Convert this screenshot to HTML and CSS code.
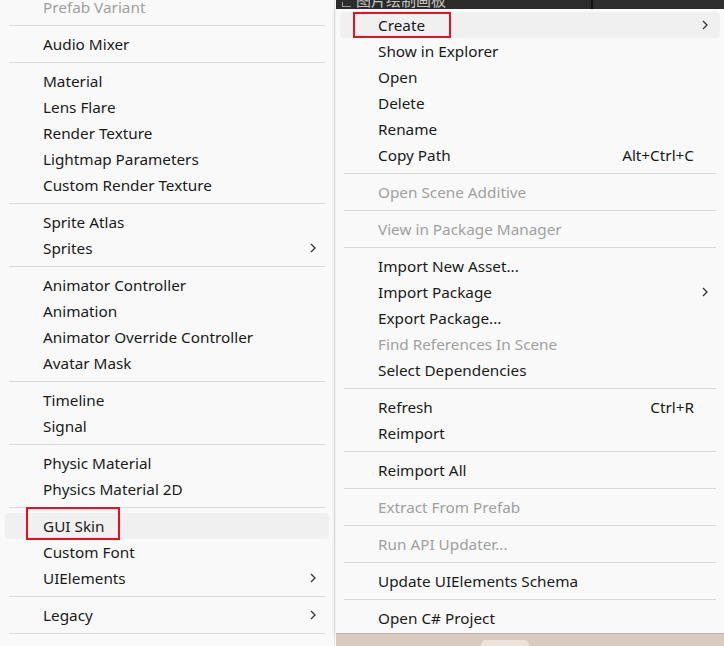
FILE: index.html
```html
<!DOCTYPE html>
<html>
<head>
<meta charset="utf-8">
<link rel="stylesheet" href="styles.css">
</head>
<body>
<div class="screen">
  <div class="menu left-menu">
    <div class="list left-list">
      <div class="item disabled"><span class="label">Prefab Variant</span></div>
      <div class="sep"></div>
      <div class="item"><span class="label">Audio Mixer</span></div>
      <div class="sep"></div>
      <div class="item"><span class="label">Material</span></div>
      <div class="item"><span class="label">Lens Flare</span></div>
      <div class="item"><span class="label">Render Texture</span></div>
      <div class="item"><span class="label">Lightmap Parameters</span></div>
      <div class="item"><span class="label">Custom Render Texture</span></div>
      <div class="sep"></div>
      <div class="item"><span class="label">Sprite Atlas</span></div>
      <div class="item"><span class="label">Sprites</span><svg class="chev" viewBox="0 0 6 10"><path d="M1 1 L5 5 L1 9" /></svg></div>
      <div class="sep"></div>
      <div class="item"><span class="label">Animator Controller</span></div>
      <div class="item"><span class="label">Animation</span></div>
      <div class="item"><span class="label">Animator Override Controller</span></div>
      <div class="item"><span class="label">Avatar Mask</span></div>
      <div class="sep"></div>
      <div class="item"><span class="label">Timeline</span></div>
      <div class="item"><span class="label">Signal</span></div>
      <div class="sep"></div>
      <div class="item"><span class="label">Physic Material</span></div>
      <div class="item"><span class="label">Physics Material 2D</span></div>
      <div class="sep"></div>
      <div class="item hover"><span class="label">GUI Skin</span></div>
      <div class="item"><span class="label">Custom Font</span></div>
      <div class="item"><span class="label">UIElements</span><svg class="chev" viewBox="0 0 6 10"><path d="M1 1 L5 5 L1 9" /></svg></div>
      <div class="sep"></div>
      <div class="item"><span class="label">Legacy</span><svg class="chev" viewBox="0 0 6 10"><path d="M1 1 L5 5 L1 9" /></svg></div>
      <div class="sep"></div>
    </div>
  </div>
  <div class="right-col">
    <div class="topbar">
      <div class="tab">
        <span class="tab-icon"></span>
        <span class="tab-title">图片绘制画板</span>
      </div>
      <div class="tab-divider"></div>
      <div class="tab-rest"></div>
    </div>
    <div class="menu right-menu">
      <div class="item hover"><span class="label">Create</span><svg class="chev" viewBox="0 0 6 10"><path d="M1 1 L5 5 L1 9" /></svg></div>
      <div class="item"><span class="label">Show in Explorer</span></div>
      <div class="item"><span class="label">Open</span></div>
      <div class="item"><span class="label">Delete</span></div>
      <div class="item"><span class="label">Rename</span></div>
      <div class="item"><span class="label">Copy Path</span><span class="shortcut">Alt+Ctrl+C</span></div>
      <div class="sep"></div>
      <div class="item disabled"><span class="label">Open Scene Additive</span></div>
      <div class="sep"></div>
      <div class="item disabled"><span class="label">View in Package Manager</span></div>
      <div class="sep"></div>
      <div class="item"><span class="label">Import New Asset...</span></div>
      <div class="item"><span class="label">Import Package</span><svg class="chev" viewBox="0 0 6 10"><path d="M1 1 L5 5 L1 9" /></svg></div>
      <div class="item"><span class="label">Export Package...</span></div>
      <div class="item disabled"><span class="label">Find References In Scene</span></div>
      <div class="item"><span class="label">Select Dependencies</span></div>
      <div class="sep"></div>
      <div class="item"><span class="label">Refresh</span><span class="shortcut">Ctrl+R</span></div>
      <div class="item"><span class="label">Reimport</span></div>
      <div class="sep"></div>
      <div class="item"><span class="label">Reimport All</span></div>
      <div class="sep"></div>
      <div class="item disabled"><span class="label">Extract From Prefab</span></div>
      <div class="sep"></div>
      <div class="item disabled"><span class="label">Run API Updater...</span></div>
      <div class="sep"></div>
      <div class="item"><span class="label">Update UIElements Schema</span></div>
      <div class="sep"></div>
      <div class="item"><span class="label">Open C# Project</span></div>
    </div>
    <div class="desktop">
      <div class="pill"></div>
    </div>
  </div>
  <div class="mark mark-create"></div>
  <div class="mark mark-skin"></div>
</div>
</body>
</html>
```

FILE: styles.css
```css
html, body {
  margin: 0;
  padding: 0;
}
body {
  width: 724px;
  height: 646px;
  overflow: hidden;
  background: #f9f9f9;
  font-family: "Noto Sans", "Open Sans", "Noto Sans CJK SC", sans-serif;
  font-size: 15.3px;
  color: #1a1a1a;
}
.screen {
  position: relative;
  display: flex;
  width: 724px;
  height: 646px;
  overflow: hidden;
}
.menu {
  background: #f9f9f9;
  box-sizing: border-box;
}
.left-menu {
  width: 335px;
  flex: none;
  border-right: 1px solid #e3e3e3;
  overflow: hidden;
}
.left-list {
  margin-top: -6px;
}
.item {
  height: 26px;
  display: flex;
  align-items: center;
  border-radius: 4px;
}
.left-menu .item {
  margin: 0 5px;
  padding-left: 38px;
  padding-right: 13px;
}
.right-menu .item {
  margin: 0 4px;
  padding-left: 38px;
  padding-right: 12px;
}
.label {
  flex: 1;
  white-space: nowrap;
  line-height: 25px;
  padding-top: 1px;
}
.item.disabled {
  color: #a0a0a0;
}
.item.hover {
  background: #f0f0f0;
}
.shortcut {
  white-space: nowrap;
  margin-right: 14px;
  line-height: 25px;
  padding-top: 1px;
}
.chev {
  width: 6px;
  height: 10px;
  flex: none;
}
.chev path {
  fill: none;
  stroke: #333;
  stroke-width: 1.3;
}
.sep {
  height: 1px;
  background: #d9d9d9;
  margin: 5px 9px;
}
.right-menu .sep {
  margin: 5px 8px;
}
.right-col {
  flex: 1;
  display: flex;
  flex-direction: column;
  margin-left: 1px;
  min-width: 0;
}
.topbar {
  height: 9px;
  flex: none;
  background: #2c2c2c;
  display: flex;
  overflow: hidden;
}
.tab {
  width: 255px;
  flex: none;
  display: flex;
  align-items: flex-end;
  gap: 5px;
  padding-left: 6px;
  box-sizing: border-box;
}
.tab-icon {
  width: 8px;
  height: 4px;
  border-left: 1px solid #9a9a9a;
  border-bottom: 1px solid #9a9a9a;
  margin-bottom: 2px;
  flex: none;
}
.tab-title {
  color: #c4c4c4;
  font-size: 15px;
  line-height: 15px;
  margin-bottom: 1px;
  white-space: nowrap;
}
.tab-divider {
  width: 2px;
  flex: none;
  background: #111;
}
.tab-rest {
  flex: 1;
  background: #2e2e2e;
}
.right-menu {
  padding-top: 3px;
  padding-bottom: 2px;
  border-bottom: 1px solid #b9b4ae;
  box-shadow: -2px 0 4px rgba(0,0,0,0.06);
}
.desktop {
  flex: 1;
  background: #d9cbbf;
  display: flex;
  justify-content: center;
  align-items: flex-end;
  padding-right: 51px;
}
.pill {
  width: 48px;
  height: 6px;
  background: #ebe3dc;
  border-radius: 5px 5px 0 0;
}
.mark {
  position: absolute;
  border: 2px solid #e8101e;
  box-sizing: border-box;
}
.mark-create {
  left: 353px;
  top: 12px;
  width: 98px;
  height: 26px;
}
.mark-skin {
  left: 26px;
  top: 507px;
  width: 94px;
  height: 33px;
}
```
